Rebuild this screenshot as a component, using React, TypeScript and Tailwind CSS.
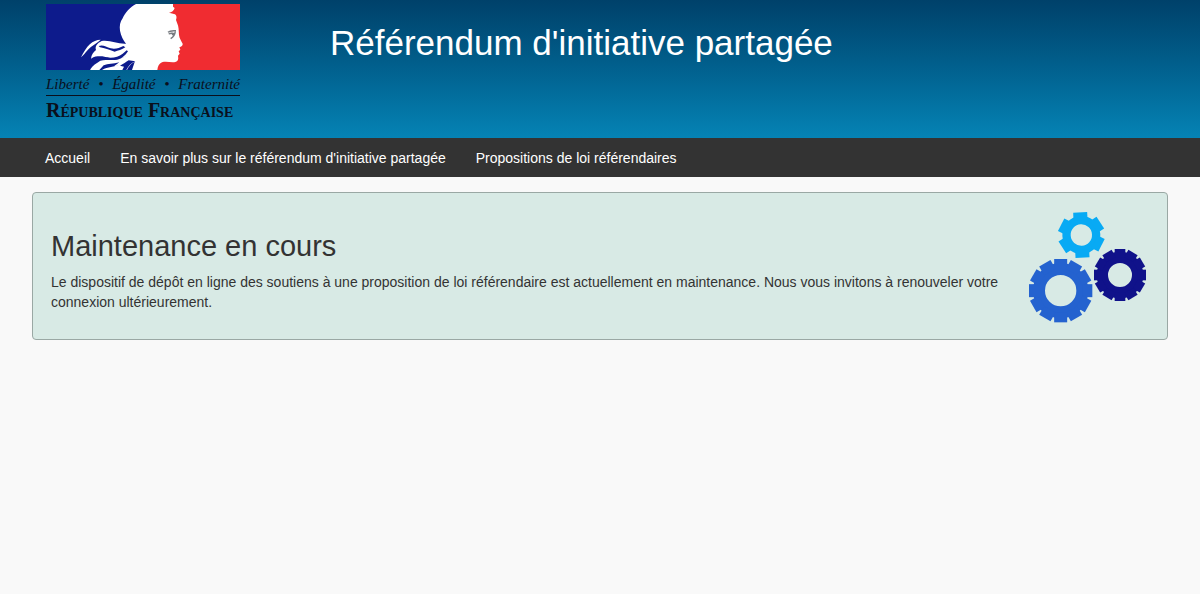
const NAV_LINKS = [
  { label: 'Accueil', href: '#accueil' },
  { label: "En savoir plus sur le référendum d'initiative partagée", href: '#en-savoir-plus' },
  { label: 'Propositions de loi référendaires', href: '#propositions' },
]

const SIX_TEETH = [0, 60, 120, 180, 240, 300]
const TWELVE_TEETH = [0, 30, 60, 90, 120, 150, 180, 210, 240, 270, 300, 330]

export default function App() {
  return (
    <div className="min-h-screen bg-[#f9f9f9] font-['Liberation_Sans',Arial,sans-serif] text-sm text-[#333333]">
      <header className="flex h-[138px] items-start bg-linear-to-b from-[#00416a] to-[#0583b5] pl-[46px]">
        <Logo />
        <h1 className="mt-[23px] ml-[90px] text-[35px] leading-10 text-white">
          Référendum d'initiative partagée
        </h1>
      </header>

      <nav aria-label="Navigation principale" className="bg-[#333333] px-[30px]">
        <ul className="flex">
          {NAV_LINKS.map((link) => (
            <li key={link.href}>
              <a href={link.href} className="block px-[15px] pt-[10px] pb-[9px] leading-5 text-white hover:underline">
                {link.label}
              </a>
            </li>
          ))}
        </ul>
      </nav>

      <main className="px-8 pt-[15px]">
        <section className="flex items-start justify-between rounded-sm border border-[#9aa8a4] bg-[#d8eae5] pt-[19px] pr-5 pb-4 pl-[18px]">
          <div className="max-w-[960px] pt-4">
            <h2 className="mb-2 text-[29px] leading-9">Maintenance en cours</h2>
            <p className="leading-5">
              Le dispositif de dépôt en ligne des soutiens à une proposition de loi référendaire est
              actuellement en maintenance. Nous vous invitons à renouveler votre connexion ultérieurement.
            </p>
          </div>
          <Gears />
        </section>
      </main>
    </div>
  )
}

function Logo() {
  return (
    <a href="#accueil" className="mt-1 block w-[194px] font-['Liberation_Serif',serif] text-[#0a0f1c]">
      <svg viewBox="18 12 582 198" className="block h-[66px] w-full" aria-hidden="true">
        <rect x="18" y="12" width="345" height="198" fill="#0d1b8c" />
        <rect x="350" y="12" width="250" height="198" fill="#f02c31" />
        {/* Head, nape and profile */}
        <path
          fill="#fff"
          d="M288 12C270 22 255 38 248 55C240 66 238 78 240 92C243 108 250 120 258 131L246 150L262 172L284 186L276 210H352C353 200 357 191 366 187C378 183 392 188 406 186C414 184 416 178 414 167L419 161L416 154L421 149L418 142C424 140 429 137 428 131C424 123 418 115 417 105C416 92 417 80 411 68L408 60C411 52 410 44 402 42L387 38C395 37 402 32 404 24L399 20V12Z"
        />
        {/* Loose strands of hair */}
        <path fill="#fff" d="M182 119C158 119 139 138 123 172C137 160 145 145 157 138C166 131 174 126 182 119Z" />
        <path
          fill="#fff"
          d="M260 131C232 133 211 119 185 123C171 130 164 139 168 150C160 156 154 165 153 176C165 168 175 169 187 169L222 177C237 180 250 174 264 165L266 140Z"
        />
        <path fill="#fff" d="M151 208C158 196 169 190 181 182C202 178 228 184 250 172L272 160L280 184C254 187 240 198 222 199L238 187C219 193 204 191 191 196L178 210H151Z" />
        <path fill="#fff" d="M186 210C204 200 222 202 239 193L266 179L288 184C272 190 266 201 261 210Z" />
        <path fill="#0d1b8c" d="M176 138C188 133 198 140 212 145C225 149 238 144 250 138L256 142C246 150 234 151 224 155C208 149 193 144 180 142Z" />
        <path fill="#0d1b8c" d="M196 171C214 176 234 172 248 161L260 151L264 154C254 169 240 181 222 180L206 177Z" />
        <path fill="#0d1b8c" d="M240 197C250 192 258 186 266 181L286 184C273 189 265 199 259 210H247L252 200Z" />
        {/* Eye */}
        <path fill="none" stroke="#777b80" strokeWidth="4" d="M384 97C391 91 400 93 408 92M386 102C392 99 398 99 405 101M406 94C405 105 401 110 392 116" />
        <path fill="#777b80" d="M394 98L405 100L401 108L396 105Z" />
      </svg>
      <span className="mt-[5px] flex justify-between text-[15px] leading-[18px] italic">
        <span>Liberté</span>
        <span>•</span>
        <span>Égalité</span>
        <span>•</span>
        <span>Fraternité</span>
      </span>
      <span className="mt-[2px] block border-t border-[#0a0f1c] pt-[4px] text-[20px] leading-5 font-bold whitespace-nowrap [font-variant-caps:small-caps]">
        République Française
      </span>
    </a>
  )
}

function Gears() {
  return (
    <svg viewBox="27 37 354 333" className="h-[111px] w-[118px] shrink-0" aria-hidden="true">
      <Gear x={184} y={106} outer={68} body={57} hole={32} tooth={42} angles={SIX_TEETH} tilt={-3} color="#08aaf4" />
      <Gear x={300} y={226} outer={78} body={70} hole={36} tooth={32} angles={TWELVE_TEETH} tilt={0} color="#10128a" />
      <Gear x={122} y={273} outer={95} body={83} hole={47} tooth={39} angles={TWELVE_TEETH} tilt={0} color="#2462cf" />
    </svg>
  )
}

type GearProps = {
  x: number
  y: number
  outer: number
  body: number
  hole: number
  tooth: number
  angles: number[]
  tilt: number
  color: string
}

function Gear({ x, y, outer, body, hole, tooth, angles, tilt, color }: GearProps) {
  // The ring is a thick stroke so that the hole stays transparent
  const ring = (body + hole) / 2

  return (
    <g transform={`translate(${x} ${y}) rotate(${tilt})`} fill={color}>
      <circle r={ring} fill="none" stroke={color} strokeWidth={body - hole} />
      {angles.map((angle) => (
        <rect
          key={angle}
          x={-tooth / 2}
          y={-outer}
          width={tooth}
          height={outer - ring}
          transform={`rotate(${angle})`}
        />
      ))}
    </g>
  )
}
